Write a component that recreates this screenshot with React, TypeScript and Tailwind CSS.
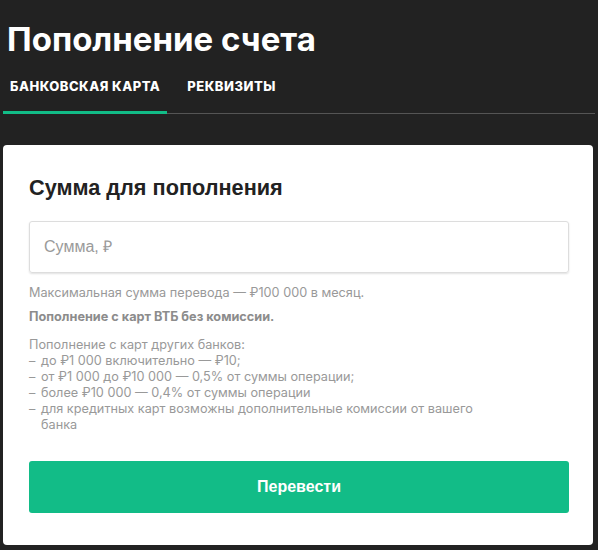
import React from "react";

export default function App() {
  const items = [
    "до ₽1 000 включительно — ₽10;",
    "от ₽1 000 до ₽10 000 — 0,5% от суммы операции;",
    "более ₽10 000 — 0,4% от суммы операции",
    "для кредитных карт возможны дополнительные комиссии от вашего банка",
  ];
  return (
    <div className="min-h-[550px] bg-[#222222] px-[3px] pb-[6px] font-['Inter',sans-serif]">
      <h1 className="pl-[4px] pt-[19px] text-[33px] font-bold leading-[40px] text-white">
        Пополнение счета
      </h1>
      <div className="mt-[19px] flex border-b border-[#555555]">
        <div className="relative px-[7px] pb-[19px] text-[13px] font-extrabold uppercase leading-[16px] tracking-[0.5px] text-white">
          Банковская карта
          <div className="absolute bottom-[-1px] left-0 right-0 h-[3px] bg-[#12bc87]" />
        </div>
        <div className="ml-[13px] px-[7px] pb-[19px] text-[13px] font-extrabold uppercase leading-[16px] tracking-[0.5px] text-white">
          Реквизиты
        </div>
      </div>
      <div className="mt-[31px] mr-[2px] rounded-[4px] bg-white pl-[26px] pr-[24px] pb-[32px] pt-[30px]">
        <h2 className="font-['Liberation_Sans',Arial,sans-serif] text-[21.7px] font-bold leading-[26px] text-[#222222]">
          Сумма для пополнения
        </h2>
        <div className="mt-[20px] flex h-[52px] items-center rounded-[3px] border border-[#dddddd] px-[14px] shadow-[0_1px_2px_rgba(0,0,0,0.12)]">
          <span className="font-['Liberation_Sans',Arial,sans-serif] text-[16px] text-[#9a9a9a]">Сумма, ₽</span>
        </div>
        <div className="mt-[12px] text-[12.7px] leading-[16px] text-[#999999]">
          <p>Максимальная сумма перевода — ₽100 000 в месяц.</p>
          <p className="mt-[8px] font-bold text-[#8c8c8c]">Пополнение с карт ВТБ без комиссии.</p>
          <p className="mt-[12px]">Пополнение с карт других банков:</p>
          <ul className="max-w-[462px]">
            {items.map((t) => (
              <li key={t} className="flex">
                <span className="w-[12px] shrink-0">–</span>
                <span>{t}</span>
              </li>
            ))}
          </ul>
        </div>
        <button className="mt-[28px] flex h-[52px] w-full items-center justify-center rounded-[3px] bg-[#12bc87] font-['Liberation_Sans',Arial,sans-serif] text-[16px] font-bold text-white">
          Перевести
        </button>
      </div>
    </div>
  );
}
